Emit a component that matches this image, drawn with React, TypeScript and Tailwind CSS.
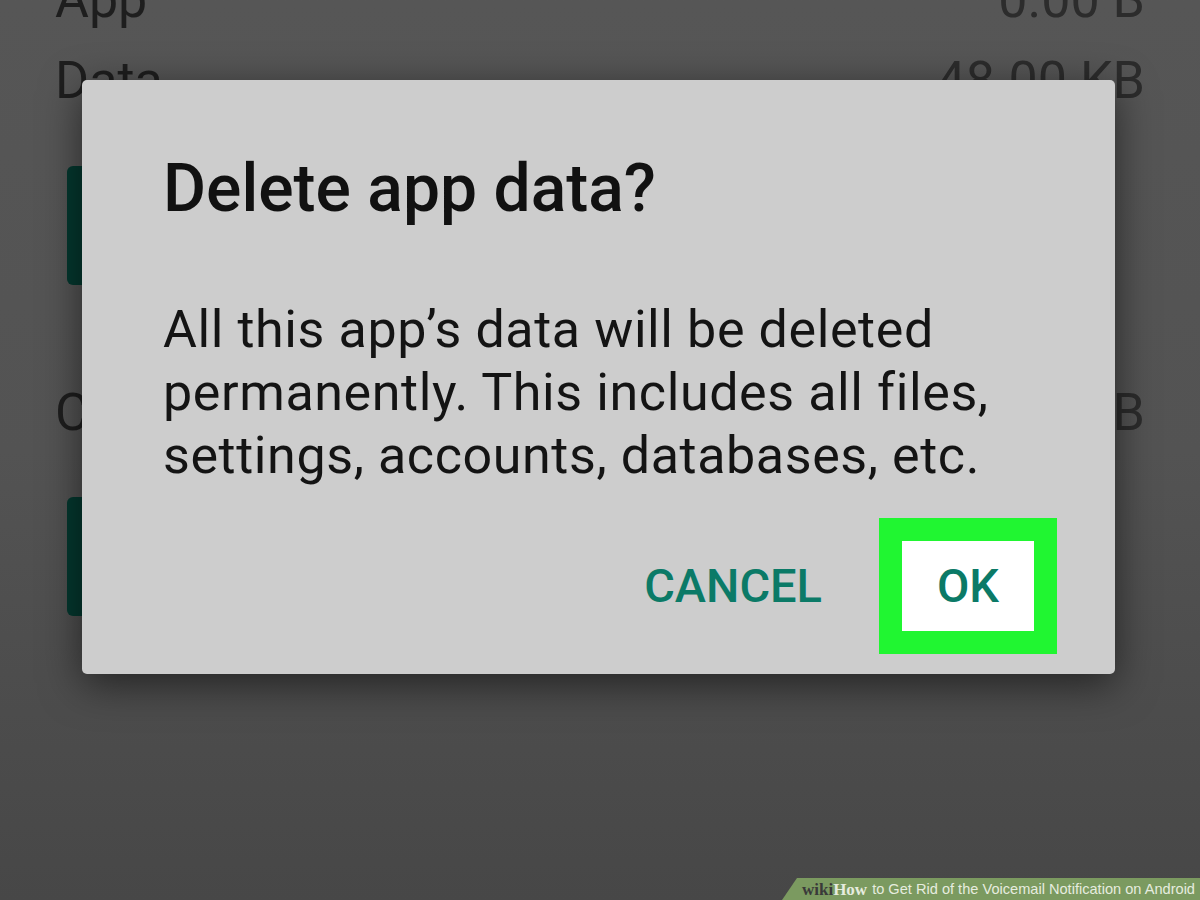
const font = { fontFamily: "Roboto, 'Liberation Sans', sans-serif" };

function SettingRow({ label, value }: { label: string; value: string }) {
  return (
    <div className="flex h-[81px] items-center justify-between pl-[55px] pr-[55px] text-[52px] leading-none text-[#1e1e1e]">
      <span>{label}</span>
      <span className="text-[#2c2c2c]">{value}</span>
    </div>
  );
}

function TealButton() {
  return <div className="ml-[67px] h-[119px] w-[400px] rounded-[6px] bg-[#04382f]" />;
}

function Watermark() {
  return (
    <div className="absolute bottom-0 right-0 flex h-[22px] w-[418px] items-center justify-end pr-[5px] leading-none">
      <div className="absolute inset-0 bg-[#7b9a60] [clip-path:polygon(15px_0,100%_0,100%_100%,0_100%)]" />
      <span className="relative text-[17px] font-bold text-[#3a3a3a] [font-family:'Liberation_Serif',serif]">wiki</span>
      <span className="relative text-[17px] font-bold text-[#e6ecdf] [font-family:'Liberation_Serif',serif]">How</span>
      <span className="relative ml-[5px] text-[14.6px] text-[#e6ecdf] [font-family:'Liberation_Sans',sans-serif]">
        to Get Rid of the Voicemail Notification on Android
      </span>
    </div>
  );
}

export default function App() {
  return (
    <div
      className="relative h-[900px] w-[1200px] overflow-hidden bg-gradient-to-b from-[#565656] via-[#535353] to-[#474747]"
      style={font}
    >
      {/* settings screen behind the dialog */}
      <div className="-mt-[41px] flex flex-col">
        <SettingRow label="App" value="0.00 B" />
        <SettingRow label="Data" value="48.00 KB" />
        <div className="mt-[45px]">
          <TealButton />
        </div>
        <div className="mt-[87px]">
          <SettingRow label="Cache" value="0.00 KB" />
        </div>
        <div className="mt-[44px]">
          <TealButton />
        </div>
      </div>

      {/* dialog */}
      <div className="absolute left-[82px] top-[80px] flex h-[594px] w-[1033px] flex-col rounded-[5px] bg-[#cdcdcd] shadow-[0_10px_40px_rgba(0,0,0,0.55)]">
        <h1 className="pl-[81px] pt-[76px] text-[66px] font-medium leading-none text-[#111]">
          Delete app data?
        </h1>
        <p className="mt-[76px] pl-[81px] pr-[30px] text-[52px] leading-[63px] tracking-[0.6px] text-[#141414]">
          All this app’s data will be deleted
          <br />
          permanently. This includes all files,
          <br />
          settings, accounts, databases, etc.
        </p>
        <div className="mt-auto flex items-center justify-end pb-[20px] pr-[58px]">
          <span className="mr-[57px] text-[47px] font-medium text-[#0b7a67]">CANCEL</span>
          <div className="flex h-[136px] w-[178px] items-center justify-center bg-[#20f631] p-[23px]">
            <div className="flex h-full w-full items-center justify-center bg-white text-[47px] font-medium text-[#0b7a67]">
              OK
            </div>
          </div>
        </div>
      </div>

      <Watermark />
    </div>
  );
}
